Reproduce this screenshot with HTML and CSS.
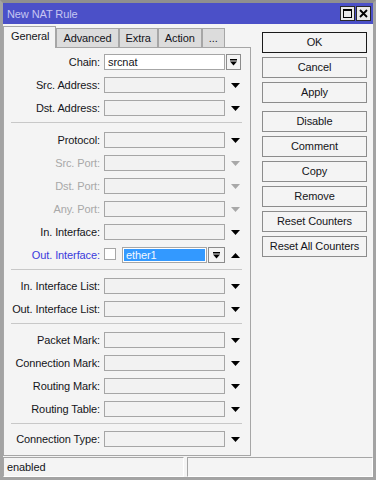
FILE: index.html
```html
<!DOCTYPE html>
<html>
<head>
<meta charset="utf-8">
<link rel="stylesheet" href="styles.css">
</head>
<body>
<div class="win">
  <div class="titlebar">
    <span class="title">New NAT Rule</span>
    <span class="tbtn"><svg width="11" height="11" viewBox="0 0 11 11"><rect x="1.5" y="1.5" width="8" height="8" fill="none" stroke="#000"/><rect x="1" y="1" width="9" height="2" fill="#000"/></svg></span>
    <span class="tbtn"><svg width="11" height="11" viewBox="0 0 11 11"><path d="M2 2 L9 9 M9 2 L2 9" stroke="#000" stroke-width="1.8"/></svg></span>
  </div>
  <div class="body">
    <div class="left">
      <div class="tabs">
        <div class="tab active">General</div>
        <div class="tab">Advanced</div>
        <div class="tab">Extra</div>
        <div class="tab">Action</div>
        <div class="tab">...</div>
      </div>
      <div class="panel">
        <div class="row"><span class="lbl">Chain:</span><span class="field white">srcnat</span><span class="ddbtn"><svg width="7" height="7" viewBox="0 0 7 7"><rect x="0" y="0" width="7" height="1.5" fill="#000"/><polygon points="0,2.5 7,2.5 3.5,6.5" fill="#000"/></svg></span></div>
        <div class="row"><span class="lbl">Src. Address:</span><span class="field"></span><span class="arrow"><svg width="9" height="5" viewBox="0 0 9 5"><polygon points="0,0 9,0 4.5,5" fill="#000"/></svg></span></div>
        <div class="row"><span class="lbl">Dst. Address:</span><span class="field"></span><span class="arrow"><svg width="9" height="5" viewBox="0 0 9 5"><polygon points="0,0 9,0 4.5,5" fill="#000"/></svg></span></div>
        <div class="sep first"></div>
        <div class="row"><span class="lbl">Protocol:</span><span class="field"></span><span class="arrow"><svg width="9" height="5" viewBox="0 0 9 5"><polygon points="0,0 9,0 4.5,5" fill="#000"/></svg></span></div>
        <div class="row dis"><span class="lbl">Src. Port:</span><span class="field"></span><span class="arrow"><svg width="9" height="5" viewBox="0 0 9 5"><polygon points="0,0 9,0 4.5,5" fill="#a8a8a8"/></svg></span></div>
        <div class="row dis"><span class="lbl">Dst. Port:</span><span class="field"></span><span class="arrow"><svg width="9" height="5" viewBox="0 0 9 5"><polygon points="0,0 9,0 4.5,5" fill="#a8a8a8"/></svg></span></div>
        <div class="row dis"><span class="lbl">Any. Port:</span><span class="field"></span><span class="arrow"><svg width="9" height="5" viewBox="0 0 9 5"><polygon points="0,0 9,0 4.5,5" fill="#a8a8a8"/></svg></span></div>
        <div class="row"><span class="lbl">In. Interface:</span><span class="field"></span><span class="arrow"><svg width="9" height="5" viewBox="0 0 9 5"><polygon points="0,0 9,0 4.5,5" fill="#000"/></svg></span></div>
        <div class="row active"><span class="lbl">Out. Interface:</span><span class="chk"></span><span class="field short white"><span class="sel">ether1</span></span><span class="ddbtn wide"><svg width="7" height="7" viewBox="0 0 7 7"><rect x="0" y="0" width="7" height="1.5" fill="#000"/><polygon points="0,2.5 7,2.5 3.5,6.5" fill="#000"/></svg></span><span class="arrow"><svg width="9" height="5" viewBox="0 0 9 5"><polygon points="0,5 9,5 4.5,0" fill="#000"/></svg></span></div>
        <div class="sep mid"></div>
        <div class="row"><span class="lbl">In. Interface List:</span><span class="field"></span><span class="arrow"><svg width="9" height="5" viewBox="0 0 9 5"><polygon points="0,0 9,0 4.5,5" fill="#000"/></svg></span></div>
        <div class="row"><span class="lbl">Out. Interface List:</span><span class="field"></span><span class="arrow"><svg width="9" height="5" viewBox="0 0 9 5"><polygon points="0,0 9,0 4.5,5" fill="#000"/></svg></span></div>
        <div class="sep mid"></div>
        <div class="row"><span class="lbl">Packet Mark:</span><span class="field"></span><span class="arrow"><svg width="9" height="5" viewBox="0 0 9 5"><polygon points="0,0 9,0 4.5,5" fill="#000"/></svg></span></div>
        <div class="row"><span class="lbl">Connection Mark:</span><span class="field"></span><span class="arrow"><svg width="9" height="5" viewBox="0 0 9 5"><polygon points="0,0 9,0 4.5,5" fill="#000"/></svg></span></div>
        <div class="row"><span class="lbl">Routing Mark:</span><span class="field"></span><span class="arrow"><svg width="9" height="5" viewBox="0 0 9 5"><polygon points="0,0 9,0 4.5,5" fill="#000"/></svg></span></div>
        <div class="row"><span class="lbl">Routing Table:</span><span class="field"></span><span class="arrow"><svg width="9" height="5" viewBox="0 0 9 5"><polygon points="0,0 9,0 4.5,5" fill="#000"/></svg></span></div>
        <div class="sep"></div>
        <div class="row"><span class="lbl">Connection Type:</span><span class="field"></span><span class="arrow"><svg width="9" height="5" viewBox="0 0 9 5"><polygon points="0,0 9,0 4.5,5" fill="#000"/></svg></span></div>
      </div>
    </div>
    <div class="buttons">
      <div class="btn default">OK</div>
      <div class="btn">Cancel</div>
      <div class="btn">Apply</div>
      <div class="btn spaced">Disable</div>
      <div class="btn">Comment</div>
      <div class="btn">Copy</div>
      <div class="btn">Remove</div>
      <div class="btn">Reset Counters</div>
      <div class="btn">Reset All Counters</div>
    </div>
  </div>
  <div class="status">
    <div class="cell c1">enabled</div>
    <div class="cell c2"></div>
  </div>
</div>
</body>
</html>
```
FILE: styles.css
```css
* { box-sizing: border-box; }
html, body { margin: 0; padding: 0; }
body {
  width: 376px;
  height: 480px;
  font-family: "Liberation Sans", Arial, sans-serif;
  font-size: 11px;
  letter-spacing: -0.1px;
  color: #141420;
  background: #f4f4f4;
}
.win {
  width: 376px;
  height: 480px;
  border: 3px solid #a3a3a3;
  border-top-color: #8f8f8f;
  display: flex;
  flex-direction: column;
  background: #f4f4f4;
}
.titlebar {
  height: 21px;
  background: #4b50c8;
  display: flex;
  align-items: center;
  padding: 0 2px 0 4px;
  flex: none;
}
.title {
  color: #c6c6f2;
  flex: 1;
  font-size: 11px;
}
.tbtn {
  width: 15px;
  height: 15px;
  margin-left: 1px;
  background: #e8e8e8;
  border: 1px solid #2a2a2a;
  display: flex;
  align-items: center;
  justify-content: center;
}
.body {
  flex: 1;
  display: flex;
  padding-top: 2px;
}
.left {
  width: 248px;
  display: flex;
  flex-direction: column;
}
.tabs {
  height: 21px;
  display: flex;
  align-items: flex-end;
  flex: none;
}
.tab {
  height: 19px;
  padding: 0 6px;
  line-height: 18px;
  background: #dcdcdc;
  border: 1px solid #a6a6a6;
  border-bottom: none;
}
.tab.active {
  height: 22px;
  margin-bottom: -1px;
  line-height: 19px;
  background: #f4f4f4;
  position: relative;
  z-index: 1;
  padding: 0 6px 0 7px;
}
.panel {
  flex: 1;
  border: 1px solid #a6a6a6;
  padding-top: 2px;
}
.row {
  height: 23px;
  display: flex;
  align-items: flex-start;
}
.lbl {
  width: 96px;
  margin-right: 4px;
  text-align: right;
  white-space: nowrap;
  margin-top: 4px;
  line-height: 16px;
}
.field {
  width: 121px;
  height: 16px;
  margin-top: 4px;
  border: 1px solid #a6a6a6;
  background: #f2f2f2;
  line-height: 14px;
  padding-left: 3px;
  color: #141420;
}
.field.white { background: #ffffff; }
.field.short {
  width: 85px;
  padding: 1px;
  line-height: 12px;
}
.sel {
  display: block;
  height: 12px;
  background: #3399ff;
  color: #f4f8ff;
  padding-left: 2px;
}
.ddbtn {
  width: 15px;
  height: 16px;
  margin-top: 4px;
  margin-left: 1px;
  border: 1px solid #8c8c8c;
  background: #f4f4f4;
  display: flex;
  align-items: center;
  justify-content: center;
}
.ddbtn.wide { width: 17px; }
.arrow {
  width: 9px;
  height: 16px;
  margin-top: 4px;
  margin-left: 6px;
  display: flex;
  align-items: center;
}
.chk {
  width: 12px;
  height: 12px;
  margin-top: 5px;
  margin-right: 6px;
  border: 1px solid #a6a6a6;
  background: #fff;
}
.row.dis .lbl { color: #a8a8a8; }
.row.active .lbl { color: #3a3adc; }
.sep {
  height: 1px;
  background: #c8c8c8;
  margin: 3px 8px 3px 7px;
}
.sep.first { margin-bottom: 5px; }
.sep.mid { margin-bottom: 4px; }
.buttons {
  width: 105px;
  margin-left: 11px;
  padding-top: 6px;
  display: flex;
  flex-direction: column;
  gap: 4px;
}
.btn {
  height: 21px;
  border: 1px solid #8c8c8c;
  background: #f4f4f4;
  text-align: center;
  line-height: 19px;
}
.btn.default { border-color: #1a1a1a; }
.btn.spaced { margin-top: 4px; }
.status {
  height: 20px;
  margin-top: 1px;
  display: flex;
  gap: 3px;
  flex: none;
}
.cell {
  height: 20px;
  border: 1px solid #a6a6a6;
  border-right-color: #ffffff;
  border-bottom-color: #ffffff;
  line-height: 18px;
  padding-left: 3px;
}
.c1 { width: 181px; }
.c2 { flex: 1; }
```
